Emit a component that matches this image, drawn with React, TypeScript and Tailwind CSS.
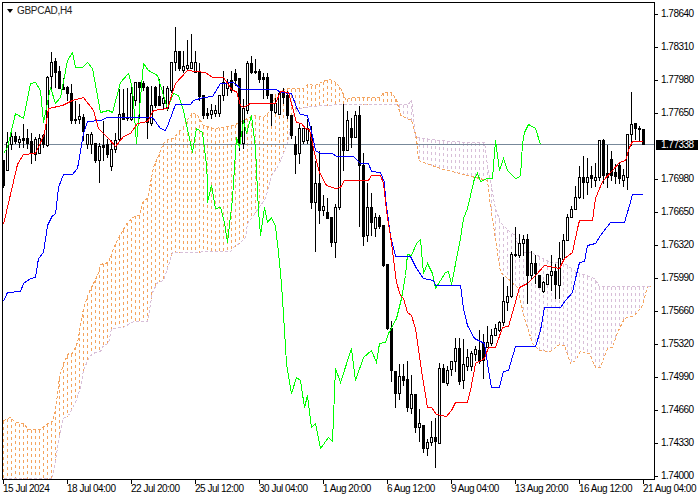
import React from 'react';

type Pt = [number, number];

// x, high, low, body top, body bottom, 1 = black body
const BARS: number[][] = [
  [3,160,187,160,185,1],[7,131,170,142,170,0],[11,131,149,136,144,0],[15,131,143,136,141,1],[19,135,147,139,142,0],
  [23,123,147,138,140,1],[27,128,148,138,143,1],[31,132,163,141,153,1],[35,136,160,139,154,0],[39,133,153,138,153,0],
  [43,133,147,135,144,1],[47,75,146,77,145,0],[51,51,90,62,76,0],[55,57,87,61,72,1],[59,65,88,71,88,1],
  [63,77,89,87,89,1],[67,85,100,87,93,1],[71,83,123,93,120,1],[75,100,123,119,120,0],[79,103,123,116,119,0],
  [83,113,140,117,131,1],[87,133,148,134,144,0],[91,131,153,134,144,0],[95,143,162,143,160,1],[99,142,182,146,160,0],
  [103,120,160,145,147,1],[107,138,157,144,154,1],[111,139,170,149,166,0],[115,132,152,140,149,0],[119,88,140,114,139,0],
  [123,88,119,113,119,1],[127,87,120,117,118,1],[131,85,120,93,119,0],[135,81,105,82,100,0],[139,81,118,82,87,1],
  [143,80,90,83,87,1],[147,85,138,87,122,1],[151,85,125,105,123,0],[155,85,107,87,105,1],[159,78,105,96,105,1],
  [163,85,108,98,103,0],[167,85,110,88,108,0],[171,62,92,62,90,0],[175,26,70,51,62,0],[179,50,70,51,68,1],
  [183,50,72,66,70,0],[187,39,70,65,68,0],[191,33,68,62,68,0],[195,50,72,62,72,0],[199,62,100,72,96,1],
  [203,95,118,95,115,1],[207,107,118,113,115,1],[211,103,118,110,114,0],[215,104,116,110,113,0],[219,95,116,95,113,0],
  [223,70,100,82,95,0],[227,78,95,82,88,0],[231,70,92,80,90,1],[235,68,85,73,80,1],[239,77,150,78,143,1],
  [243,98,148,108,143,0],[247,60,113,63,110,0],[251,55,73,63,72,1],[255,58,73,71,72,1],[259,68,82,71,79,1],
  [263,72,98,77,79,1],[267,72,98,77,95,1],[271,94,125,94,110,1],[275,97,113,103,112,0],[279,90,114,93,114,0],
  [283,87,103,93,97,1],[287,90,118,95,115,1],[291,115,138,115,135,1],[295,135,173,144,154,1],[299,122,163,128,153,0],
  [303,127,143,128,141,0],[307,118,143,128,140,0],[311,125,208,136,202,1],[315,160,251,183,202,0],[319,150,223,183,210,1],
  [323,194,215,206,210,0],[327,197,218,212,218,1],[331,217,246,217,242,1],[335,203,257,207,242,0],[339,137,209,137,207,0],
  [343,103,170,137,150,1],[347,110,150,120,150,0],[351,117,147,128,137,1],[355,110,137,115,137,0],[359,105,226,115,165,1],
  [363,152,245,165,236,1],[367,182,241,207,235,0],[371,192,235,207,222,1],[375,212,236,217,228,0],[379,214,228,217,226,1],
  [383,225,266,225,265,1],[387,264,329,264,328,1],[391,320,381,328,370,1],[395,370,407,371,393,1],[399,363,399,376,393,0],
  [403,363,385,376,380,1],[407,360,411,379,407,1],[411,374,413,394,408,0],[415,394,432,394,427,1],[419,408,441,423,427,0],
  [423,425,452,425,448,1],[427,438,455,442,448,0],[431,420,445,437,442,0],[435,417,467,437,441,1],[439,362,443,368,443,0],
  [443,363,382,368,382,1],[447,365,385,370,383,0],[451,360,375,361,369,0],[455,337,371,348,361,0],[459,337,384,348,381,1],
  [463,338,388,364,380,0],[467,348,370,357,366,0],[471,350,370,353,366,0],[475,345,360,349,354,0],[479,329,363,350,361,1],
  [483,333,378,342,360,1],[487,325,347,342,347,0],[491,328,345,335,343,0],[495,323,335,328,335,0],[499,320,331,322,330,0],
  [503,276,325,301,322,0],[507,285,310,296,302,0],[511,251,297,254,296,0],[515,226,256,254,255,1],[519,233,257,243,255,0],
  [523,234,255,239,243,0],[527,233,303,239,275,1],[531,250,278,263,275,0],[535,254,283,263,273,1],[539,274,287,275,287,1],
  [543,280,292,282,291,0],[547,273,284,274,284,0],[551,254,290,271,275,0],[555,263,298,271,284,1],[559,241,298,258,285,0],
  [563,233,259,240,259,0],[567,213,240,217,240,0],[571,205,217,209,217,0],[575,185,209,197,209,0],[579,165,198,177,197,0],
  [583,155,198,177,182,1],[587,157,194,177,182,0],[591,165,187,175,178,1],[595,162,186,177,180,0],[599,139,180,140,177,0],
  [603,138,183,140,175,1],[607,144,187,173,177,1],[611,150,180,159,175,1],[615,163,183,172,176,1],[619,161,183,165,178,1],
  [623,168,186,175,180,0],[627,133,189,134,177,0],[631,91,145,124,134,0],[635,122,139,123,128,1],[639,125,140,128,129,1],
  [643,129,144,129,144,1],
];

const GREEN = '3,153 7,147 15,113 23,118 30,83 35,82 40,90 43,122 50,87 55,103 60,97 67,60 72,52 75,67 82,67 87,62 92,68 100,112 108,110 112,112 120,82 128,73 132,88 136,143 140,97 143,63 148,70 157,75 167,108 173,93 178,95 183,110 192,152 196,128 202,132 206,165 207,182 207,202 211,185 215,208 220,207 224,222 227,242 232,198 236,137 239,147 243,120 246,133 251,115 255,147 256,170 258,210 260,235 264,207 267,222 271,217 275,226 278,252 280,272 282,298 284,330 286,363 291,393 296,377 300,380 304,407 307,395 311,427 315,423 320,448 328,437 332,441 335,368 340,382 351,348 355,380 363,357 371,350 376,362 379,343 385,342 388,333 396,318 401,298 405,275 407,254 411,255 416,243 420,239 423,273 427,263 432,273 435,288 445,272 448,271 451,284 460,238 463,218 467,208 474,178 477,173 480,181 487,178 492,178 495,140 499,170 503,158 507,170 509,172 515,178 520,176 522,143 524,132 528,124 535,128 540,144';
const RED = '3,224 17,164 23,154 35,153 41,140 44,133 48,108 62,105 72,100 83,97 93,110 98,128 108,138 115,146 123,136 130,133 137,123 147,121 153,110 167,108 175,83 187,70 205,72 212,77 223,77 232,90 236,91 240,105 243,107 250,103 275,103 280,91 288,92 291,103 296,122 301,123 305,128 309,129 315,157 319,172 326,185 335,188 340,187 344,180 368,180 371,175 380,175 383,183 387,218 390,235 393,258 396,282 400,295 403,298 407,312 411,315 415,328 421,370 427,407 431,407 436,414 446,416 451,410 455,402 467,402 470,390 475,363 484,358 488,347 495,347 502,327 508,326 514,305 519,287 527,283 535,275 544,265 549,266 559,268 564,258 572,252 577,228 579,220 592,220 595,198 602,181 612,170 619,162 625,160 629,147 632,141 642,141';
const BLUE = '3,301 7,292 20,291 23,283 30,278 35,277 38,258 43,252 47,225 52,215 55,214 58,187 63,174 72,174 77,168 83,133 87,121 100,120 107,117 152,117 160,128 165,130 168,123 175,104 190,104 193,100 203,97 212,96 220,83 233,82 241,89 276,89 280,92 291,93 296,107 300,114 307,115 313,140 315,150 320,153 332,153 336,156 353,156 360,163 368,163 371,171 380,172 384,182 385,198 390,235 395,256 410,256 416,268 423,278 433,280 435,285 460,285 463,308 467,325 474,338 484,343 487,363 491,387 499,387 503,371 508,370 515,346 535,346 540,330 544,307 560,307 565,300 572,292 575,278 579,262 584,261 587,245 595,243 600,235 610,222 624,222 629,205 632,194 642,194';
const SPAN_A = '3,420 10,417 15,422 23,423 28,429 40,429 47,423 52,421 55,410 59,377 63,363 68,353 72,353 77,342 83,308 88,293 97,275 100,264 108,262 115,243 127,222 135,215 139,215 143,200 147,198 153,167 163,143 167,139 173,138 182,127 192,112 197,115 203,125 213,128 222,127 233,125 243,120 253,115 263,117 270,110 276,92 288,88 303,88 307,84 315,85 320,82 328,79 333,80 340,87 345,99 351,97 380,97 383,92 391,92 396,99 400,115 411,120 416,137 418,160 426,163 440,168 467,175 487,180 489,198 494,232 500,272 505,276 517,287 524,318 528,330 532,343 539,350 550,351 559,344 564,345 570,363 575,360 580,351 589,353 595,367 600,367 607,348 612,347 617,332 624,318 634,315 642,305 647,286 650,286';
const SPAN_B = '3,478 52,478 55,460 60,430 63,418 68,415 75,402 80,387 83,370 88,358 92,353 100,351 103,345 108,343 111,328 123,327 133,321 147,321 152,292 157,282 163,280 167,268 172,252 230,251 233,247 240,242 245,237 247,223 251,218 258,208 265,198 271,175 278,165 288,140 291,117 298,108 311,106 340,104 396,104 408,104 411,99 415,137 440,140 466,142 484,142 487,165 495,208 500,222 510,232 515,235 519,252 530,252 537,255 550,262 564,263 577,272 594,278 599,286 650,286';

const parse = (s: string): Pt[] => s.split(' ').map((p) => p.split(',').map(Number) as Pt);

const yAt = (pts: Pt[], x: number) => {
  for (let i = 1; i < pts.length; i++) {
    if (x <= pts[i][0]) {
      const [x0, y0] = pts[i - 1];
      const [x1, y1] = pts[i];
      return y0 + ((y1 - y0) * (x - x0)) / (x1 - x0);
    }
  }
  return pts[pts.length - 1][1];
};

const Cloud = () => {
  const a = parse(SPAN_A);
  const b = parse(SPAN_B);
  const hatch = [];
  for (let x = 3; x <= 650; x += 4) {
    const ya = Math.round(yAt(a, x));
    const yb = Math.round(yAt(b, x));
    hatch.push(
      <line key={x} x1={x} x2={x} y1={Math.min(ya, yb)} y2={Math.max(ya, yb)} stroke={ya < yb ? '#F4A460' : '#D8BFD8'} strokeDasharray="3 3" />,
    );
  }
  return (
    <g>
      {hatch}
      <polyline points={SPAN_A} fill="none" stroke="#F4A460" strokeDasharray="3 2" />
      <polyline points={SPAN_B} fill="none" stroke="#D8BFD8" strokeDasharray="3 2" />
    </g>
  );
};

const Chart = () => (
  <svg className="absolute inset-0 w-full h-full" viewBox="3 3 651 476" shapeRendering="crispEdges">
    <g transform="translate(0.5 0.5)">
      <Cloud />
      <line x1={3} x2={654} y1={144} y2={144} stroke="#778899" />
      {BARS.map(([x, h, l, t, b, k]) => (
        <g key={x}>
          <line x1={x} x2={x} y1={h} y2={l} stroke="#000" />
          <rect x={x - 1} y={t} width={2} height={Math.max(b - t, 1)} fill={k ? '#000' : '#fff'} stroke="#000" />
        </g>
      ))}
      <polyline points={GREEN} fill="none" stroke="#00FF00" />
      <polyline points={BLUE} fill="none" stroke="#0000FF" />
      <polyline points={RED} fill="none" stroke="#FF0000" />
    </g>
  </svg>
);

const PRICES = ['1.78640', '1.78310', '1.77980', '1.77650', '', '1.76980', '1.76650', '1.76320', '1.75990', '1.75660', '1.75320', '1.74990', '1.74660', '1.74330', '1.74000'];
const TIMES = ['15 Jul 2024', '18 Jul 04:00', '22 Jul 20:00', '25 Jul 12:00', '30 Jul 04:00', '1 Aug 20:00', '6 Aug 12:00', '9 Aug 04:00', '13 Aug 20:00', '16 Aug 12:00', '21 Aug 04:00'];

export default function App() {
  return (
    <div className="w-[700px] h-[500px] bg-white overflow-hidden pt-[2px] pl-[2px] text-[10px] tracking-[-0.5px] leading-none text-black font-['Liberation_Sans',sans-serif]">
      <div className="flex h-[478px]">
        <div className="relative w-[653px] h-[478px] border border-black">
          <Chart />
          <div className="absolute left-[4px] top-[3px] flex items-center gap-[4px] tracking-[-0.3px] text-[#222]">
            <span className="w-0 h-0 border-x-[3.5px] border-x-transparent border-t-[4px] border-t-black" />
            <span>GBPCAD,H4</span>
          </div>
        </div>
        <div className="relative flex-1 h-[478px] pt-[7px]">
          {PRICES.map((p, i) => (
            <div key={i} className={i === 14 ? 'h-[12px] flex items-start gap-[2px]' : 'h-[33px] flex items-start gap-[2px]'}>
              {p && <span className="w-[4px] h-px bg-black mt-[5px] -ml-px" />}
              {p && <span className="ml-[1px]">{p}</span>}
            </div>
          ))}
          <div className="absolute left-[1px] top-[138px] w-[42px] h-[10px] bg-black text-white flex items-center pl-[5px]">1.77338</div>
        </div>
      </div>
      <div className="flex pl-[1px]">
        {TIMES.map((t) => (
          <div key={t} className="w-[64px] shrink-0 flex flex-col items-start">
            <span className="w-px h-[4px] bg-black" />
            <span className="whitespace-nowrap">{t}</span>
          </div>
        ))}
      </div>
    </div>
  );
}
